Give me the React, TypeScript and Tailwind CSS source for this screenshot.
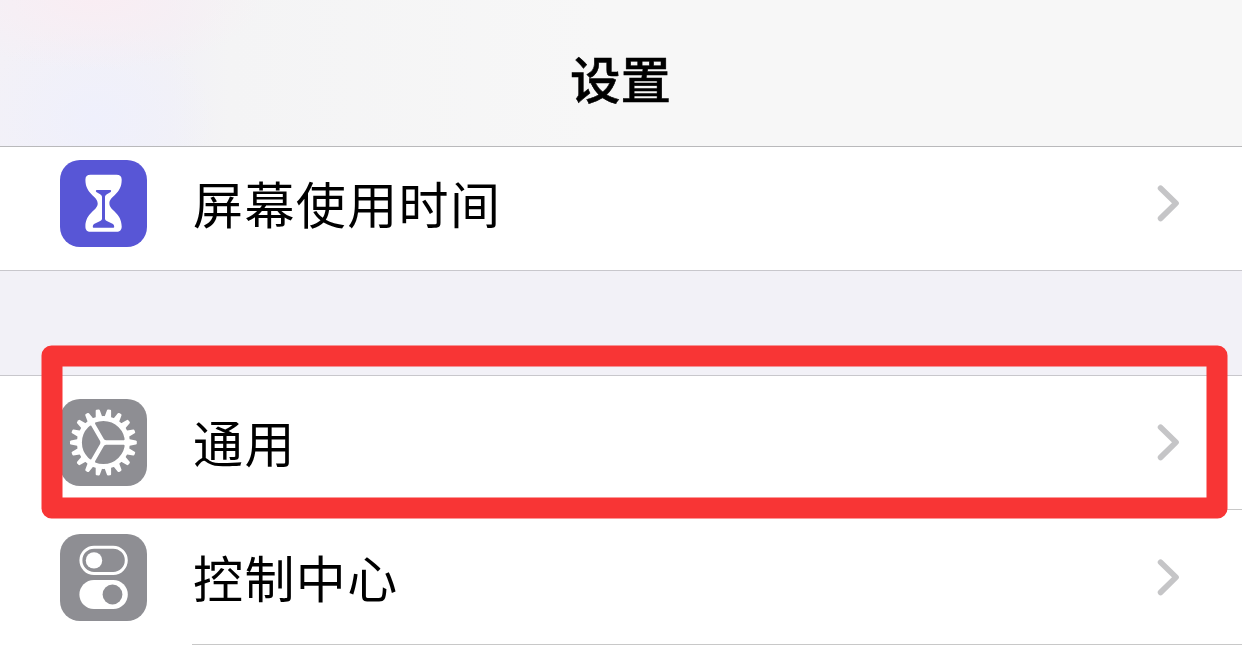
import React from "react";

interface SettingsRowProps {
    label: string;
    icon: React.ReactNode;
    className: string;
    labelClassName: string;
    iconClassName: string;
}

const TEETH = Array.from({ length: 18 }, (_, i) => i * 20);
const SPOKES = [0, 120, 240];

function HourglassIcon() {
    return (
        <svg viewBox="0 0 87 87" className="h-full w-full" aria-hidden="true">
            <path
                fill="#fff"
                d="M30.5 14.8H56.5C60 14.8 61.7 16.6 61.7 19.8C61.7 34.5 49.4 36 49.4 43.4C49.4 50.5 61.7 52.5 61.7 66.5C61.7 69.8 60 71.8 56.5 71.8H30.5C27 71.8 25.4 69.8 25.4 66.5C25.4 52.5 37.7 50.5 37.7 43.4C37.7 36 25.4 34.5 25.4 19.8C25.4 16.6 27 14.8 30.5 14.8Z"
            />
            <path
                fill="#5856d6"
                d="M36.8 30H50.2C51.3 30 51.5 31.2 50.7 31.9L46.5 34.6C45.3 35.5 45 36.3 45 37.5V58.5C45 59.8 45.6 60.4 46.8 60.9L52.5 63.8C53.6 64.4 54.2 65.4 54.2 66.7C54.2 67.4 53.8 67.8 53.1 67.8H33.9C33.2 67.8 32.8 67.4 32.8 66.7C32.8 65.4 33.4 64.4 34.5 63.8L40.2 60.9C41.4 60.4 42 59.8 42 58.5V37.5C42 36.3 41.7 35.5 40.5 34.6L36.3 31.9C35.5 31.2 35.7 30 36.8 30Z"
            />
        </svg>
    );
}

function GearIcon() {
    return (
        <svg viewBox="0 0 87 87" className="h-full w-full" aria-hidden="true">
            <g transform="translate(43.4 43.5)" fill="#fff">
                <circle r="24" fill="none" stroke="#fff" strokeWidth="5" />
                {TEETH.map((deg) => (
                    <path
                        key={deg}
                        transform={`rotate(${deg})`}
                        d="M25 -3.4L32.5 -2.1Q33.4 -1.9 33.4 -1V1Q33.4 1.9 32.5 2.1L25 3.4Z"
                    />
                ))}
                {SPOKES.map((deg) => (
                    <path
                        key={deg}
                        transform={`rotate(${deg})`}
                        d="M0 -2.2H20.5L23 -4V4L20.5 2.2H0Z"
                    />
                ))}
                <circle r="3" />
            </g>
        </svg>
    );
}

function TogglesIcon() {
    return (
        <svg viewBox="0 0 87 87" className="h-full w-full" aria-hidden="true">
            <rect
                x="20.9"
                y="13.2"
                width="45.4"
                height="26.3"
                rx="13.15"
                fill="none"
                stroke="#fff"
                strokeWidth="3"
            />
            <circle cx="34" cy="26.4" r="8.2" fill="#fff" />
            <rect x="19.4" y="46" width="48.4" height="29" rx="14.5" fill="#fff" />
            <circle cx="52.5" cy="60.5" r="9.9" fill="#8e8e93" />
        </svg>
    );
}

function Chevron() {
    return (
        <svg
            viewBox="0 0 26 40"
            className="h-10 w-[26px] shrink-0"
            fill="none"
            stroke="#c5c5c7"
            strokeWidth="5.7"
            strokeLinecap="round"
            strokeLinejoin="round"
            aria-hidden="true"
        >
            <path d="M4.6 4.2L20 19.3L4.6 34.4" />
        </svg>
    );
}

function SettingsRow({
    label,
    icon,
    className,
    labelClassName,
    iconClassName,
}: SettingsRowProps) {
    return (
        <div className={`flex items-start bg-white pl-[60px] ${className}`}>
            <div
                className={`h-[87px] w-[87px] shrink-0 overflow-hidden rounded-[20px] ${iconClassName}`}
            >
                {icon}
            </div>
            <div
                className={`ml-[45px] flex flex-1 items-start justify-between self-stretch pr-[60px] ${labelClassName}`}
            >
                <span className="flex h-[87px] items-center pb-[3px] pl-px text-[50px] leading-none tracking-[1.4px]">
                    {label}
                </span>
                <span className="flex h-[87px] items-center">
                    <Chevron />
                </span>
            </div>
        </div>
    );
}

export default function App() {
    return (
        <div className="relative h-[660px] w-[1242px] overflow-hidden bg-white font-['Noto_Sans_CJK_SC',sans-serif] text-black">
            <header className="flex h-[147px] items-center justify-center border-b border-[#b9b9bb] bg-[#f6f6f6] bg-[radial-gradient(ellipse_170px_70px_at_95px_0px,#f9edf3,transparent),radial-gradient(ellipse_120px_100px_at_95px_120px,#eff0fc,transparent),linear-gradient(to_right,#f3f1f7_0px,#f2f1f6_170px,#f4f4f5_230px,#f7f7f7_600px)] pt-[9px]">
                <h1 className="pr-px text-[50.5px] leading-none font-medium [-webkit-text-stroke:0.5px_black]">
                    设置
                </h1>
            </header>

            <SettingsRow
                label="屏幕使用时间"
                icon={<HourglassIcon />}
                className="h-[123px] pt-[13px]"
                labelClassName=""
                iconClassName="bg-[#5856d6]"
            />

            {/* gap between the two groups */}
            <div className="h-[106px] border-y border-[#c8c7cc] bg-[#f2f1f7]" />

            <SettingsRow
                label="通用"
                icon={<GearIcon />}
                className="h-[134px] pt-[23px]"
                labelClassName="border-b border-[#c8c8c8]"
                iconClassName="bg-[#8e8e93]"
            />
            <SettingsRow
                label="控制中心"
                icon={<TogglesIcon />}
                className="h-[135px] pt-6"
                labelClassName="border-b border-[#c8c8c8]"
                iconClassName="bg-[#8e8e93]"
            />

            {/* highlight frame over the General row */}
            <div className="absolute top-[346px] left-[42px] h-[173px] w-[1186px] -translate-x-[0.5px] -translate-y-[0.5px] rounded-[10px] border-[21px] border-[#f83535]" />
        </div>
    );
}
